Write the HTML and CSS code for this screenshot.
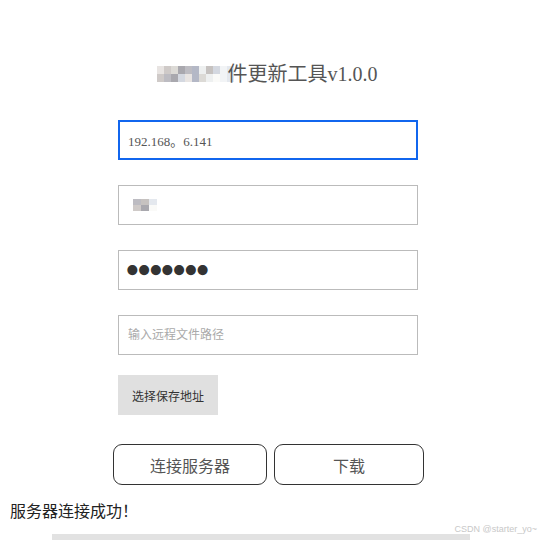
FILE: index.html
```html
<!DOCTYPE html>
<html lang="zh-CN">
<head>
    <meta charset="UTF-8">
    <title>软件更新工具</title>
    <link rel="stylesheet" href="styles.css">
</head>
<body>
<div class="window">
    <h1 class="title"><span class="mosaic"><i class="m1"></i><i class="m2"></i><i class="m3"></i><i class="m4"></i><i class="m5"></i><i class="m6"></i><i class="m7"></i><i class="m8"></i><i class="m9"></i><i class="m10"></i><i class="m11"></i><i class="m2"></i><i class="m5"></i><i class="m4"></i><i class="m9"></i><i class="m1"></i><i class="m6"></i><i class="m3"></i><i class="m7"></i><i class="m12"></i><i class="m10"></i><i class="m11"></i></span>件更新工具v1.0.0</h1>
    <form class="form" name="update-form">
        <input type="text" name="host" class="form-control focused" value="192.168。6.141">
        <div class="form-control user"><span class="mosaic small"><i class="m5"></i><i class="m8"></i><i class="m11"></i><i class="m2"></i><i class="m4"></i><i class="m12"></i></span></div>
        <input type="password" name="password" class="form-control pwd" value="1234567">
        <input type="text" name="remote" class="form-control" placeholder="输入远程文件路径">
        <div class="form-row">
            <input type="button" name="btn-save" value="选择保存地址" class="btn-save">
        </div>
    </form>
    <div class="actions">
        <input type="button" name="btn-connect" value="连接服务器" class="btn btn-connect">
        <input type="button" name="btn-download" value="下载" class="btn btn-download">
    </div>
    <p class="status">服务器连接成功！</p>
    <div class="bottom">
        <div class="progress"></div>
        <span class="mark">CSDN @starter_yo~</span>
    </div>
</div>
</body>
</html>
```

FILE: styles.css
```css
* {
    box-sizing: border-box;
}

body {
    margin: 0;
    font-family: "Liberation Serif", "Noto Sans CJK SC", serif;
    background: #fff;
}

.window {
    width: 540px;
    height: 540px;
    display: flex;
    flex-direction: column;
    align-items: center;
    overflow: hidden;
}

.title {
    margin: 61px 0 0 -6px;
    font-size: 20px;
    font-weight: normal;
    line-height: 26px;
    color: #555;
    display: flex;
    align-items: center;
}

.mosaic {
    display: inline-grid;
    grid-template-columns: repeat(11, 7px);
    grid-auto-rows: 8px;
    margin-right: -6px;
}

.mosaic i {
    display: block;
}

.mosaic.small {
    grid-template-columns: repeat(3, 8px);
    grid-auto-rows: 6px;
    margin: 0;
}

.m1 { background: #e8e4e2; }
.m2 { background: #cfcac8; }
.m3 { background: #dcdad6; }
.m4 { background: #a9a8ae; }
.m5 { background: #bdbcc2; }
.m6 { background: #b4b8c6; }
.m7 { background: #eef0f0; }
.m8 { background: #c6c2c0; }
.m9 { background: #d4d8e0; }
.m10 { background: #f2f4f6; }
.m11 { background: #e4e8ee; }
.m12 { background: #fafaf8; }

.form {
    width: 300px;
    margin: 33px 0 0 -4px;
    display: flex;
    flex-direction: column;
    gap: 25px;
}

.form-control {
    width: 300px;
    height: 40px;
    padding: 0 9px;
    border: 1px solid #bbb;
    background: #fff;
    font-family: "Liberation Serif", "Noto Sans CJK SC", serif;
    font-size: 13px;
    color: #555;
    outline: none;
}

.form-control.focused {
    border: 2px solid #1166ee;
    padding: 0 8px;
}

.form-control::placeholder {
    color: #aaa;
    font-size: 12px;
}

.user {
    display: flex;
    align-items: center;
    padding-left: 14px;
}

.pwd {
    font-size: 42px;
    color: #333;
    letter-spacing: -3px;
    padding-left: 6px;
}

.form-row {
    margin-top: -5px;
}

.btn-save {
    width: 100px;
    height: 40px;
    border: none;
    background: #e0e0e0;
    color: #333;
    font-family: "Noto Sans CJK SC", sans-serif;
    font-size: 12px;
}

.actions {
    display: flex;
    gap: 7px;
    margin: 29px 0 0 -3px;
}

.btn {
    height: 41px;
    border: 1px solid #333;
    border-radius: 9px;
    background: #fff;
    color: #555;
    font-family: "Noto Sans CJK SC", sans-serif;
    font-size: 16px;
}

.btn-connect {
    width: 154px;
}

.btn-download {
    width: 150px;
}

.status {
    align-self: flex-start;
    margin: 14px 0 0 10px;
    font-family: "Noto Sans CJK SC", serif;
    font-size: 16px;
    line-height: 22px;
    color: #222;
}

.bottom {
    position: relative;
    width: 100%;
    margin-top: auto;
    height: 12px;
}

.progress {
    position: absolute;
    left: 52px;
    bottom: 0;
    width: 418px;
    height: 6px;
    background: #e2e2e2;
}

.mark {
    position: absolute;
    right: 3px;
    bottom: 6px;
    font-family: "Liberation Sans", sans-serif;
    font-size: 9px;
    color: #c8c8c8;
}
```
